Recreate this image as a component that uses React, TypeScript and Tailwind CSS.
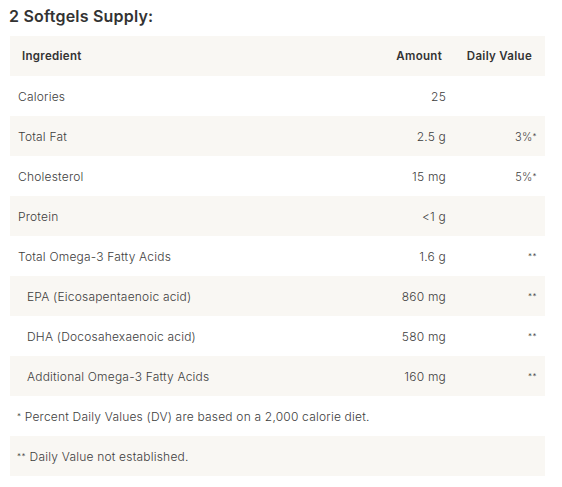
import React from "react";

type Row = { name: string; amount: string; dv: string; indent?: boolean };

const rows: Row[] = [
  { name: "Calories", amount: "25", dv: "" },
  { name: "Total Fat", amount: "2.5 g", dv: "3%*" },
  { name: "Cholesterol", amount: "15 mg", dv: "5%*" },
  { name: "Protein", amount: "<1 g", dv: "" },
  { name: "Total Omega-3 Fatty Acids", amount: "1.6 g", dv: "**" },
  { name: "EPA (Eicosapentaenoic acid)", amount: "860 mg", dv: "**", indent: true },
  { name: "DHA (Docosahexaenoic acid)", amount: "580 mg", dv: "**", indent: true },
  { name: "Additional Omega-3 Fatty Acids", amount: "160 mg", dv: "**", indent: true },
];

function Dv({ v }: { v: string }) {
  const m = v.match(/^([^*]*)(\**)$/);
  const main = m ? m[1] : v;
  const stars = m ? m[2] : "";
  return (
    <span>
      {main}
      {stars && <span className="text-[8px] relative -top-[2px] tracking-[0.5px]">{stars}</span>}
    </span>
  );
}

export default function App() {
  return (
    <div className="w-[562px] h-[487px] bg-white text-[#333] pl-[10px] pr-[17px]" style={{ fontFamily: "Inter, 'Noto Sans', sans-serif" }}>
      <h2 className="text-[16px] font-semibold leading-none pt-[8px] h-[36px] -ml-[1px] text-[#333] tracking-[0.2px]">2 Softgels Supply:</h2>
      <div className="flex flex-col">
        <div className="flex items-center h-[40px] pt-[2px] bg-[#f9f7f3] text-[11.5px] font-semibold text-[#333] tracking-[0.3px]">
          <div className="flex-1 pl-[12px]">Ingredient</div>
          <div className="w-[80px] text-right pr-[4px]">Amount</div>
          <div className="w-[99px] text-right pr-[13px]">Daily Value</div>
        </div>
        {rows.map((r, i) => (
          <div
            key={r.name}
            className={`flex items-center h-[40px] pt-[2px] text-[12px] font-light tracking-[0.2px] text-[#3d3d3d] ${i % 2 === 1 ? "bg-[#f9f7f3]" : "bg-white"}`}
          >
            <div className={`flex-1 ${r.indent ? "pl-[17px]" : "pl-[8px]"}`}>{r.name}</div>
            <div className="w-[80px] text-right">{r.amount}</div>
            <div className="w-[99px] text-right pr-[8px] text-[11px]"><Dv v={r.dv} /></div>
          </div>
        ))}
        <div className="flex items-center h-[40px] pt-[2px] text-[12px] font-light tracking-[0.2px] text-[#3d3d3d] bg-white pl-[7px]">
          <span><span className="text-[8px] relative -top-[2px]">*</span> Percent Daily Values (DV) are based on a 2,000 calorie diet.</span>
        </div>
        <div className="flex items-center h-[40px] pt-[2px] text-[12px] font-light tracking-[0.2px] text-[#3d3d3d] bg-[#f9f7f3] pl-[7px]">
          <span><span className="text-[8px] relative -top-[2px] tracking-[0.5px]">**</span> Daily Value not established.</span>
        </div>
      </div>
    </div>
  );
}
